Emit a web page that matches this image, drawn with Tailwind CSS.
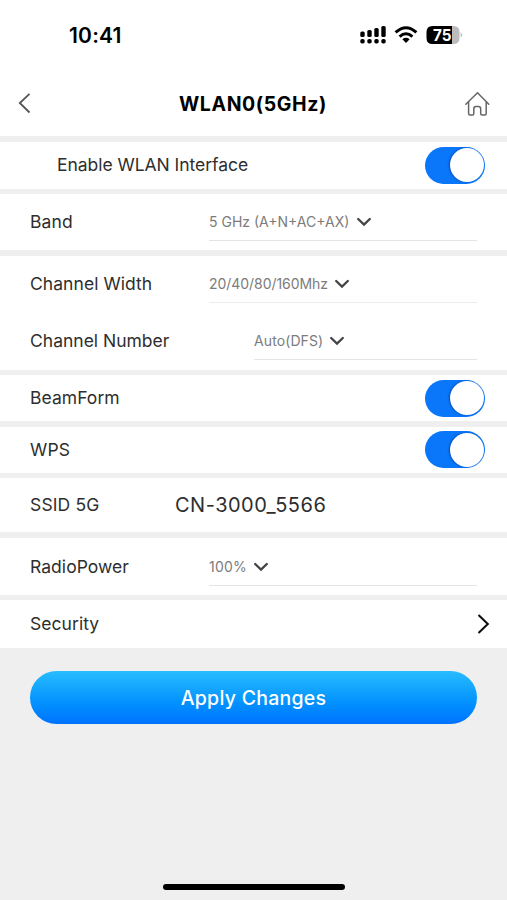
<!DOCTYPE html>
<html lang="en">
<head>
<meta charset="utf-8">
<title>WLAN0(5GHz)</title>
<script src="https://cdn.jsdelivr.net/npm/@tailwindcss/browser@4"></script>
</head>
<body class="bg-[#efefef]">
<svg class="hidden">
  <symbol id="down" viewBox="0 0 16 12"><path d="M2.2 3 8 8.6 13.8 3" fill="none" stroke="#444" stroke-width="2.3" stroke-linecap="round" stroke-linejoin="miter"/></symbol>
</svg>
<div class="relative flex h-[900px] w-[507px] flex-col gap-[5.5px] overflow-hidden bg-[#efefef] font-['Inter','Liberation_Sans',sans-serif] text-[17.5px] leading-6 text-[#2e2e2e]">
  <div class="flex h-[136px] shrink-0 flex-col bg-white">
    <div class="flex h-[70px] items-center justify-between pr-[44px] pl-[69px]">
      <span class="pt-px text-[21px] font-semibold tracking-[0.200px] text-black">10:41</span>
      <div class="flex items-center">
        <svg class="h-[20px] w-[103px]" viewBox="0 0 103 20">
          <g fill="#000">
            <rect x="0.3" y="6.5" width="4.4" height="5.5" rx="1.6"/><rect x="7.3" y="5" width="4.4" height="7" rx="1.6"/><rect x="14.3" y="3" width="4.4" height="9" rx="1.6"/><rect x="21.3" y="1" width="4.4" height="11" rx="1.6"/>
            <rect x="0.3" y="14" width="4.4" height="4.5" rx="1.8"/><rect x="7.3" y="14" width="4.4" height="4.5" rx="1.8"/><rect x="14.3" y="14" width="4.4" height="4.5" rx="1.8"/><rect x="21.3" y="14" width="4.4" height="4.5" rx="1.8"/>
          </g>
          <g fill="none" stroke="#000" stroke-width="3"><path d="M35.6 7.4Q46 -2 56.4 7.4"/><path d="M39.6 11.6Q46 6 52.4 11.6"/></g>
          <path d="M42.4 14.3Q46 11.4 49.6 14.3L46 18Z" fill="#000"/>
          <path d="M72.500 1H92v18H72.500Q66.500 19 66.500 13V7Q66.500 1 72.500 1Z" fill="#000"/>
          <path d="M92 1H93.500Q99.500 1 99.500 7V13Q99.500 19 93.500 19H92Z" fill="#bcbcbc"/>
          <path d="M100.600 7.500Q102.200 8.500 102.200 10T100.600 12.500Z" fill="#bcbcbc"/>
          <text x="73" y="15.700" font-size="16" font-weight="700" fill="#fff" textLength="18.500" lengthAdjust="spacingAndGlyphs">75</text>
        </svg>
      </div>
    </div>
    <div class="flex h-[66px] items-center justify-between pr-[17px] pl-[18px]">
      <svg class="h-[22px] w-[24px]" viewBox="0 0 24 22"><path d="M11.500 1.800 1.800 11 11.500 20.500" fill="none" stroke="#555" stroke-width="1.800"/></svg>
      <h1 class="pt-px text-[19.500px] font-bold tracking-[0.600px] text-black">WLAN0(5GHz)</h1>
      <svg class="mt-px h-[26px] w-[26px]" viewBox="0 0 26 26"><g fill="none" stroke="#666" stroke-width="1.500" stroke-linejoin="round" stroke-linecap="round"><path d="M1.800 13.200 13.500 1.800 24.800 13.200"/><path d="M4.600 11V22.500Q4.600 24 6 24H8.500Q9.800 24 9.800 22.500V18Q9.800 15.500 12 15.500H14.500Q16.700 15.500 16.700 18V22.500Q16.700 24 18.100 24H20.800Q22.200 24 22.200 22.500V11"/></g></svg>
    </div>
  </div>

  <div class="flex h-[47px] shrink-0 items-center justify-between bg-white pr-[22px] pl-[57px]">
    <span class="tracking-[-0.040px]">Enable WLAN Interface</span>
    <div class="flex h-[37px] w-[60px] items-center justify-end rounded-full bg-[#0a77fb] p-[1.500px]"><div class="h-[34px] w-[34px] rounded-full bg-white shadow-[-1px_0px_2px_rgba(0,30,110,0.500)]"></div></div>
  </div>

  <div class="flex h-[56px] shrink-0 justify-between bg-white pr-[30px] pl-[30px]">
    <span class="pt-[16px] tracking-[0.100px]">Band</span>
    <div class="flex h-[47px] w-[268px] items-center gap-[7px] border-b border-[#e4e4e4] pt-[10px] text-[14px] text-[#7c7c7c]"><span>5 GHz (A+N+AC+AX)</span><svg class="h-3 w-4"><use href="#down"/></svg></div>
  </div>

  <div class="flex h-[114px] shrink-0 flex-col bg-white pr-[30px] pl-[30px]">
    <div class="flex h-[57px] justify-between">
      <span class="pt-[16.500px] tracking-[0.050px]">Channel Width</span>
      <div class="flex h-[47px] w-[268px] items-center gap-[6px] border-b border-[#ececec] pt-[11px] text-[14px] text-[#7c7c7c]"><span class="tracking-[-0.050px]">20/40/80/160Mhz</span><svg class="h-3 w-4"><use href="#down"/></svg></div>
    </div>
    <div class="flex h-[57px] justify-between">
      <span class="pt-[16px]">Channel Number</span>
      <div class="flex h-[47px] w-[223px] items-center gap-[6px] border-b border-[#e4e4e4] pt-[11px] text-[14px] text-[#7c7c7c]"><span class="tracking-[0.100px]">Auto(DFS)</span><svg class="h-3 w-4"><use href="#down"/></svg></div>
    </div>
  </div>

  <div class="flex h-[46px] shrink-0 items-center justify-between bg-white pr-[22px] pl-[30px]">
    <span class="tracking-[0.050px]">BeamForm</span>
    <div class="flex h-[37px] w-[60px] items-center justify-end rounded-full bg-[#0a77fb] p-[1.500px]"><div class="h-[34px] w-[34px] rounded-full bg-white shadow-[-1px_0px_2px_rgba(0,30,110,0.500)]"></div></div>
  </div>

  <div class="flex h-[46px] shrink-0 items-center justify-between bg-white pr-[22px] pl-[30px]">
    <span class="tracking-[0.200px]">WPS</span>
    <div class="flex h-[37px] w-[60px] items-center justify-end rounded-full bg-[#0a77fb] p-[1.500px]"><div class="h-[34px] w-[34px] rounded-full bg-white shadow-[-1px_0px_2px_rgba(0,30,110,0.500)]"></div></div>
  </div>

  <div class="flex h-[54px] shrink-0 items-center bg-white pl-[30px]">
    <span class="w-[145px] tracking-[0.150px]">SSID 5G</span>
    <span class="text-[20px] tracking-[0.500px]">CN-3000_5566</span>
  </div>

  <div class="flex h-[57px] shrink-0 justify-between bg-white pr-[30px] pl-[30px]">
    <span class="pt-[17px] tracking-[0.050px]">RadioPower</span>
    <div class="flex h-[48px] w-[268px] items-center gap-[6px] border-b border-[#e4e4e4] pt-[11px] text-[14px] text-[#7c7c7c]"><span class="tracking-[0.200px]">100%</span><svg class="h-3 w-4"><use href="#down"/></svg></div>
  </div>

  <div class="flex h-[48px] shrink-0 items-center justify-between bg-white pr-[16px] pl-[30px]">
    <span class="tracking-[0.050px]">Security</span>
    <svg class="h-[22px] w-[15px]" viewBox="0 0 15 22"><path d="M2.500 2 11.800 11 2.500 20" fill="none" stroke="#111" stroke-width="2.100"/></svg>
  </div>

  <button class="mt-[17.500px] ml-[30px] flex h-[53px] w-[447px] shrink-0 items-center justify-center rounded-full bg-linear-to-b from-[#28bcff] to-[#0072ff] text-[19.500px] font-medium tracking-[0.250px] text-white">Apply Changes</button>

  <div class="absolute bottom-[10px] left-[163px] h-[6px] w-[182px] rounded-full bg-black"></div>
</div>
</body>
</html>
